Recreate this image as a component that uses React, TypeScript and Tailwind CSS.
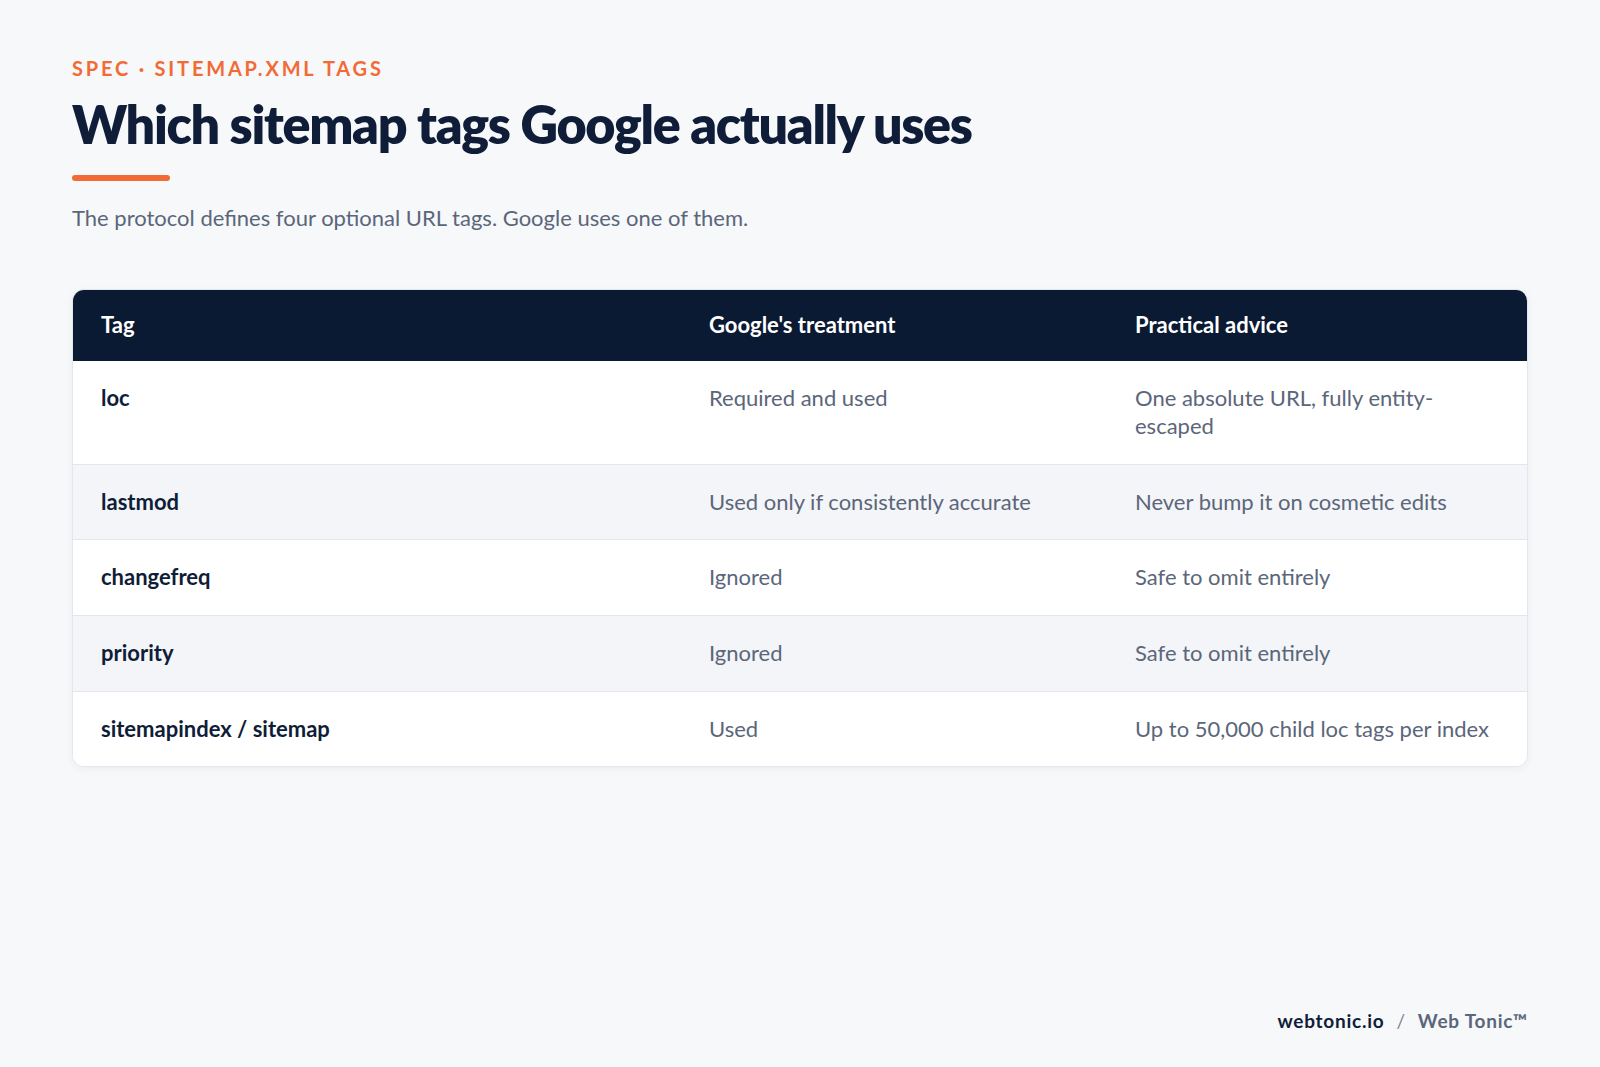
const rows = [
  { tag: "loc", treatment: "Required and used", advice: "One absolute URL, fully entity-escaped" },
  { tag: "lastmod", treatment: "Used only if consistently accurate", advice: "Never bump it on cosmetic edits" },
  { tag: "changefreq", treatment: "Ignored", advice: "Safe to omit entirely" },
  { tag: "priority", treatment: "Ignored", advice: "Safe to omit entirely" },
  { tag: "sitemapindex / sitemap", treatment: "Used", advice: "Up to 50,000 child loc tags per index" },
];

const App = () => {
  return (
    <div className="min-h-screen flex flex-col bg-[#f6f8fa] px-[72px] pt-[58px] pb-[32px] font-['Lato','Noto_Sans',sans-serif]">
      <main className="flex-1">
        <header>
          <div className="text-[20px] font-bold tracking-[0.14em] text-[#f26b35] leading-none">
            SPEC · SITEMAP.XML TAGS
          </div>
          <h1 className="mt-[20px] text-[52px] font-extrabold tracking-[-0.025em] text-[#0f1d38] leading-none">
            Which sitemap tags Google actually uses
          </h1>
          <div className="mt-[25px] h-[6px] w-[98px] rounded-full bg-[#f26b35]" />
          <p className="mt-[26px] text-[22px] text-[#5b667a] leading-none">
            The protocol defines four optional URL tags. Google uses one of them.
          </p>
        </header>

        <div className="mt-[60px] rounded-[12px] border border-[#e3e7ed] bg-white overflow-hidden shadow-[0_2px_8px_rgba(15,29,56,0.05)]">
          <div className="grid grid-cols-[608px_426px_1fr] bg-[#0b1a33] text-white text-[22px] font-bold leading-[1.3]">
            <div className="px-[28px] py-[21px]">Tag</div>
            <div className="px-[28px] py-[21px]">Google's treatment</div>
            <div className="px-[28px] py-[21px]">Practical advice</div>
          </div>
          {rows.map((r, i) => (
            <div
              key={r.tag}
              className={`grid grid-cols-[608px_426px_1fr] text-[22px] leading-[1.3] ${i > 0 ? "border-t border-[#e3e7ed]" : ""} ${i % 2 === 1 ? "bg-[#f3f5f8]" : "bg-white"}`}
            >
              <div className="px-[28px] py-[23px] font-bold text-[#0f1d38]">{r.tag}</div>
              <div className="px-[28px] py-[23px] text-[#5b667a]">{r.treatment}</div>
              <div className="px-[28px] py-[23px] text-[#5b667a]">{r.advice}</div>
            </div>
          ))}
        </div>
      </main>

      <footer className="flex justify-end items-center gap-[12px] text-[19px] font-bold tracking-[0.04em]">
        <span className="text-[#0f1d38]">webtonic.io</span>
        <span className="text-[#7a8497] font-normal">/</span>
        <span className="text-[#5b667a]">Web Tonic™</span>
      </footer>
    </div>
  );
};

export default App;
